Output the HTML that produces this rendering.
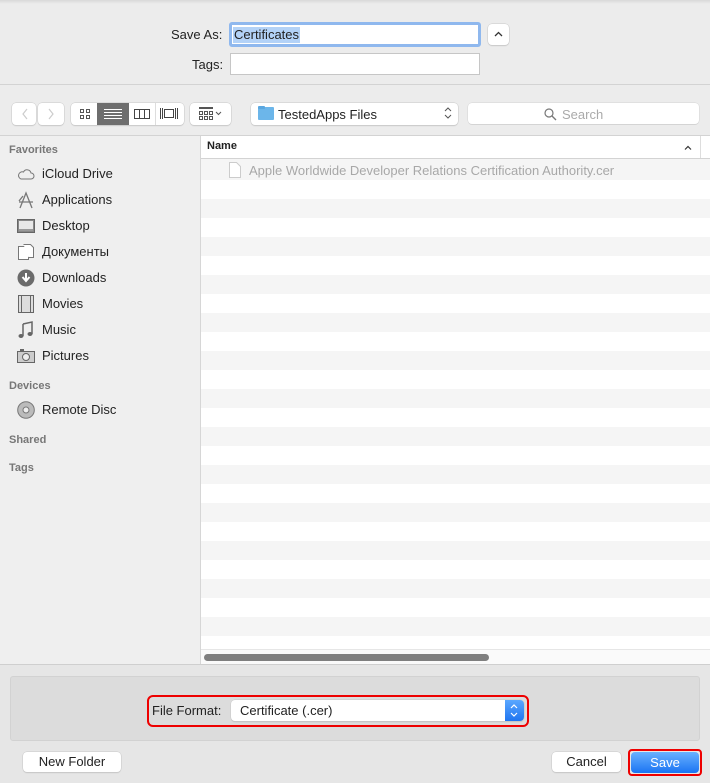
<!DOCTYPE html>
<html><head><meta charset="utf-8">
<style>
*{box-sizing:border-box;margin:0;padding:0}
body{width:710px;height:783px;overflow:hidden;background:#ececec;font-family:"Liberation Sans",sans-serif;font-size:13px;color:#222;position:relative}
.abs{position:absolute}
.btn{position:absolute;background:#fff;border-radius:4px;box-shadow:0 0 0 .5px #c8c8c8,0 1px 1px rgba(0,0,0,.15)}
.side div.i{position:absolute;left:42px;font-size:13px;color:#222}
.side div.h{position:absolute;left:9px;font-size:11px;font-weight:bold;color:#777}
.ic{position:absolute;left:17px;width:18px;height:18px}
</style></head><body>
<div class="abs" style="left:0;top:0;width:710px;height:4px;background:linear-gradient(#d8d8d8,#ececec)"></div>
<div class="abs" style="left:171px;top:27px;font-size:13px">Save As:</div>
<div class="abs" style="left:229px;top:22px;width:252px;height:25px;border:3px solid #8fb8ee;border-radius:3px;background:#fff"></div>
<div class="abs" style="left:233px;top:27px;background:#b3d2f7;padding:0 1px;line-height:16px">Certificates</div>
<div class="btn" style="left:488px;top:24px;width:21px;height:21px"></div>
<svg class="abs" style="left:494px;top:31px" width="9" height="6"><polyline points="1,5 4.5,1.5 8,5" fill="none" stroke="#333" stroke-width="1.3"/></svg>
<div class="abs" style="left:192px;top:57px">Tags:</div>
<div class="abs" style="left:230px;top:53px;width:250px;height:22px;background:#fff;border:1px solid #c6c6c6"></div>
<div class="abs" style="left:0;top:84px;width:710px;height:1px;background:#d3d3d3"></div>
<div class="btn" style="left:12px;top:103px;width:24px;height:22px"></div>
<div class="btn" style="left:38px;top:103px;width:26px;height:22px"></div>
<svg class="abs" style="left:19px;top:107px" width="40" height="14"><polyline points="8,2 4,7 8,12" fill="none" stroke="#ccc" stroke-width="1.2"/><polyline points="30,2 34,7 30,12" fill="none" stroke="#ccc" stroke-width="1.2"/></svg>
<div class="abs" style="left:71px;top:103px;width:113px;height:22px;background:#fff;border-radius:4px;box-shadow:0 0 0 .5px #c8c8c8,0 1px 1px rgba(0,0,0,.15)"></div>
<svg class="abs" style="left:79px;top:108px" width="12" height="12"><g fill="none" stroke="#555"><rect x="1.5" y="1.5" width="3" height="3"/><rect x="7.5" y="1.5" width="3" height="3"/><rect x="1.5" y="7.5" width="3" height="3"/><rect x="7.5" y="7.5" width="3" height="3"/></g></svg>
<div class="abs" style="left:97px;top:103px;width:32px;height:22px;background:#6e6e6e"></div>
<svg class="abs" style="left:104px;top:107px" width="18" height="14"><g stroke="#fff"><line x1="0" y1="2.5" x2="18" y2="2.5"/><line x1="0" y1="5.5" x2="18" y2="5.5"/><line x1="0" y1="8.5" x2="18" y2="8.5"/><line x1="0" y1="11.5" x2="18" y2="11.5"/></g></svg>
<svg class="abs" style="left:133px;top:108px" width="18" height="12"><g fill="none" stroke="#444"><rect x="1.5" y="1.5" width="15" height="9"/><line x1="6.5" y1="1.5" x2="6.5" y2="10.5"/><line x1="11.5" y1="1.5" x2="11.5" y2="10.5"/></g></svg>
<div class="abs" style="left:155px;top:103px;width:1px;height:22px;background:#ddd"></div>
<svg class="abs" style="left:159px;top:107px" width="20" height="14"><g fill="none" stroke="#444"><rect x="5.5" y="2.5" width="9" height="8"/><line x1="1.5" y1="1" x2="1.5" y2="12"/><line x1="3.5" y1="1" x2="3.5" y2="12"/><line x1="16.5" y1="1" x2="16.5" y2="12"/><line x1="18.5" y1="1" x2="18.5" y2="12"/></g></svg>
<div class="btn" style="left:190px;top:103px;width:41px;height:22px"></div>
<svg class="abs" style="left:199px;top:107px" width="28" height="14"><g fill="none" stroke="#555"><rect x="0.5" y="0.5" width="13" height="1"/><rect x="0.5" y="4.5" width="3" height="3"/><rect x="5.5" y="4.5" width="3" height="3"/><rect x="10.5" y="4.5" width="3" height="3"/><rect x="0.5" y="9.5" width="3" height="3"/><rect x="5.5" y="9.5" width="3" height="3"/><rect x="10.5" y="9.5" width="3" height="3"/><polyline points="17,5 19.5,7.5 22,5"/></g></svg>
<div class="btn" style="left:251px;top:103px;width:207px;height:22px"></div>
<div class="abs" style="left:258px;top:107px;width:16px;height:13px;background:#6cb6ea;border-radius:1px"></div>
<div class="abs" style="left:258px;top:106px;width:7px;height:3px;background:#5aa7e0;border-radius:1px"></div>
<div class="abs" style="left:278px;top:107px;font-size:13px">TestedApps Files</div>
<svg class="abs" style="left:444px;top:106px" width="8" height="14"><polyline points="1,5 4,2 7,5" fill="none" stroke="#555"/><polyline points="1,9 4,12 7,9" fill="none" stroke="#555"/></svg>
<div class="btn" style="left:468px;top:103px;width:231px;height:21px;box-shadow:0 0 0 .5px #d5d5d5,0 1px 0 rgba(0,0,0,.1)"></div>
<svg class="abs" style="left:544px;top:108px" width="13" height="13"><circle cx="5" cy="5" r="4" fill="none" stroke="#777" stroke-width="1.2"/><line x1="8" y1="8" x2="12" y2="12" stroke="#777" stroke-width="1.3"/></svg>
<div class="abs" style="left:562px;top:107px;color:#aaa">Search</div>
<div class="abs" style="left:0;top:135px;width:710px;height:1px;background:#d3d3d3"></div>
<div class="abs side" style="left:0;top:136px;width:200px;height:528px;background:#efefef">
<div class="h" style="top:8px">Favorites</div>
<svg class="ic" style="top:29px" viewBox="0 0 18 18"><path d="M4 14h10a3 3 0 0 0 0-6 4 4 0 0 0-7.5-1A3.5 3.5 0 0 0 4 14z" fill="none" stroke="#777"/></svg>
<div class="i" style="top:30px">iCloud Drive</div>
<svg class="ic" style="top:55px" viewBox="0 0 18 18"><g stroke="#777" fill="none" stroke-width="1.3"><path d="M3 17 9 2l6 15M2 11h14M6 5l-4 5"/></g></svg>
<div class="i" style="top:56px">Applications</div>
<svg class="ic" style="top:81px" viewBox="0 0 18 18"><rect x="0.5" y="2.5" width="17" height="13" fill="#888" stroke="#666"/><rect x="2" y="4" width="14" height="10" fill="#e8e8e8"/><rect x="2" y="12" width="14" height="2" fill="#999"/></svg>
<div class="i" style="top:82px">Desktop</div>
<svg class="ic" style="top:107px" viewBox="0 0 18 18"><g fill="#fff" stroke="#777"><path d="M1.5 3.5h7l3 3v10h-10z"/><path d="M6.5 1.5h7l3 3v10h-5"/></g></svg>
<div class="i" style="top:108px">Документы</div>
<svg class="ic" style="top:133px" viewBox="0 0 18 18"><circle cx="9" cy="9" r="8.5" fill="#6b6b6b"/><path d="M9 4v7M5.5 8 9 12l3.5-4" stroke="#fff" stroke-width="2" fill="none"/></svg>
<div class="i" style="top:134px">Downloads</div>
<svg class="ic" style="top:159px" viewBox="0 0 18 18"><rect x="1.5" y="0.5" width="15" height="17" fill="#ddd" stroke="#666"/><path d="M4.5 1v16M13.5 1v16" stroke="#666"/></svg>
<div class="i" style="top:160px">Movies</div>
<svg class="ic" style="top:185px" viewBox="0 0 18 18"><path d="M6 3l9-2v12" fill="none" stroke="#666" stroke-width="1.5"/><path d="M6 3v12" stroke="#666" stroke-width="1.5"/><ellipse cx="4" cy="15" rx="2.5" ry="2" fill="#666"/><ellipse cx="13" cy="13" rx="2.5" ry="2" fill="#666"/></svg>
<div class="i" style="top:186px">Music</div>
<svg class="ic" style="top:211px" viewBox="0 0 18 18"><rect x="0.5" y="4.5" width="17" height="11" fill="#ccc" stroke="#666"/><circle cx="9" cy="10" r="3.5" fill="#eee" stroke="#666"/><rect x="3" y="2" width="4" height="2" fill="#666"/></svg>
<div class="i" style="top:212px">Pictures</div>
<div class="h" style="top:244px">Devices</div>
<svg class="ic" style="top:265px" viewBox="0 0 18 18"><circle cx="9" cy="9" r="8.3" fill="#bbb" stroke="#777"/><circle cx="9" cy="9" r="3" fill="#eee" stroke="#777"/></svg>
<div class="i" style="top:266px">Remote Disc</div>
<div class="h" style="top:298px">Shared</div>
<div class="h" style="top:326px">Tags</div>
</div>
<div class="abs" style="left:200px;top:136px;width:1px;height:528px;background:#d6d6d6"></div>
<div class="abs" style="left:201px;top:136px;width:509px;height:528px;background:#fff"></div>
<div class="abs" style="left:201px;top:136px;width:509px;height:23px;background:#fff;border-bottom:1px solid #d3d3d3"></div>
<div class="abs" style="left:207px;top:140px;font-size:11px;font-weight:bold">Name</div>
<svg class="abs" style="left:684px;top:145px" width="8" height="5"><polyline points="1,4.5 4,1.5 7,4.5" fill="none" stroke="#333" stroke-width="1.2"/></svg>
<div class="abs" style="left:700px;top:136px;width:1px;height:22px;background:#ddd"></div>
<div class="abs" style="left:201px;top:159px;width:509px;height:21px;background:#f5f5f5"></div>
<div class="abs" style="left:201px;top:180px;width:509px;height:469px;background:repeating-linear-gradient(#fff 0 19px,#f5f5f5 19px 38px)"></div>
<svg class="abs" style="left:229px;top:162px" width="12" height="16"><path d="M0.5 0.5h7l4 4v11h-11z" fill="#fff" stroke="#ccc"/></svg>
<div class="abs" style="left:249px;top:163px;color:#a8a8a8">Apple Worldwide Developer Relations Certification Authority.cer</div>
<div class="abs" style="left:201px;top:649px;width:509px;height:15px;background:#fafafa;border-top:1px solid #e6e6e6"></div>
<div class="abs" style="left:204px;top:654px;width:285px;height:7px;background:#7f7f7f;border-radius:4px"></div>
<div class="abs" style="left:0;top:664px;width:710px;height:1px;background:#cfcfcf"></div>
<div class="abs" style="left:0;top:665px;width:710px;height:118px;background:#e6e6e6"></div>
<div class="abs" style="left:10px;top:676px;width:690px;height:65px;background:#dcdcdc;border:1px solid #d2d2d2;border-radius:3px"></div>
<div class="abs" style="left:147px;top:695px;height:32px;border:2px solid #e00;border-radius:6px;width:382px"></div>
<div class="abs" style="left:152px;top:703px">File Format:</div>
<div class="btn" style="left:231px;top:700px;width:293px;height:21px"></div>
<div class="abs" style="left:240px;top:703px">Certificate (.cer)</div>
<div class="abs" style="left:505px;top:700px;width:19px;height:21px;background:linear-gradient(#5aa7ff,#1f75f0);border-radius:0 4px 4px 0"></div>
<svg class="abs" style="left:510px;top:703px" width="8" height="15"><polyline points="1,5 4,2 7,5" fill="none" stroke="#fff" stroke-width="1.2"/><polyline points="1,10 4,13 7,10" fill="none" stroke="#fff" stroke-width="1.2"/></svg>
<div class="btn" style="left:23px;top:752px;width:98px;height:20px;text-align:center;line-height:20px">New Folder</div>
<div class="btn" style="left:552px;top:752px;width:69px;height:20px;text-align:center;line-height:20px">Cancel</div>
<div class="abs" style="left:628px;top:749px;width:74px;height:27px;border:2px solid #e00;border-radius:4px"></div>
<div class="abs" style="left:631px;top:752px;width:68px;height:21px;background:linear-gradient(#69b1fe,#1b74f3);border-radius:4px;color:#fff;text-align:center;line-height:21px">Save</div>
</body></html>
